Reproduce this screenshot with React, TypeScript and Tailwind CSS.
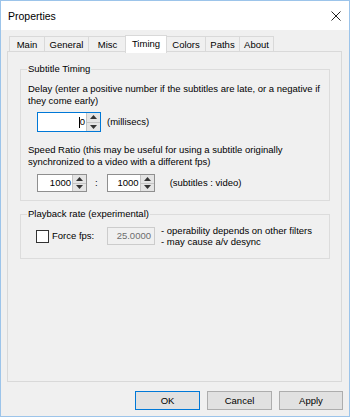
import type { ReactNode } from "react";

const tabs: [string, number][] = [
  ["Main", 35], ["General", 44], ["Misc", 38], ["Timing", 40],
  ["Colors", 39], ["Paths", 34], ["About", 35],
];

function Arrows() {
  return (
    <div className="w-[14px] flex flex-col bg-[#e4e4e4] border-l border-[#c4c4c4]">
      <div className="flex-1 flex items-center justify-center border-b border-[#c4c4c4]">
        <svg width="7" height="4" viewBox="0 0 7 4"><path d="M0 4L3.5 0L7 4Z" fill="#333" /></svg>
      </div>
      <div className="flex-1 flex items-center justify-center">
        <svg width="7" height="4" viewBox="0 0 7 4"><path d="M0 0L3.5 4L7 0Z" fill="#333" /></svg>
      </div>
    </div>
  );
}

function SpinBox({ value, width, height, focused, caret }: {
  value: string, width: string, height: string, focused?: boolean, caret?: boolean
}) {
  return (
    <div className={`flex bg-white border ${focused ? "border-[#0078d7]" : "border-[#8f8f8f]"} ${width} ${height}`}>
      <div className="flex-1 flex items-center justify-end pr-[1px]">
        {caret && <span className="w-px h-[11px] bg-black" />}
        {value}
      </div>
      <Arrows />
    </div>
  );
}

function Group({ title, className, children }: { title: string, className: string, children: ReactNode }) {
  return (
    <div className={`relative ml-[12px] w-[310px] border border-[#dcdcdc] ${className}`}>
      <span className="absolute -top-[7px] left-[6px] bg-[#f0f0f0] px-[1px] leading-[12px]">{title}</span>
      {children}
    </div>
  );
}

export default function App() {
  return (
    <div className="w-[350px] h-[417px] border border-[#9cc4ea] bg-[#f0f0f0] flex flex-col font-['Liberation_Sans',sans-serif] text-[9.5px] text-black leading-[12px]">
      <div className="h-[29px] bg-white flex items-center justify-between pl-[7px] pr-[7px]">
        <span className="text-[10.5px] pt-[1px]">Properties</span>
        <svg width="10" height="10" viewBox="0 0 10 10" className="mr-[1px]">
          <path d="M0.5 0.5L9.5 9.5M9.5 0.5L0.5 9.5" stroke="#222" strokeWidth="1" />
        </svg>
      </div>

      <div className="flex-1 flex flex-col pl-[6px] pr-[6px] pt-[4px]">
        <div className="flex items-end h-[18px] pl-[2px]">
          {tabs.map(([name, w]) => name === "Timing" ? (
            <div key={name} style={{ width: w + 2 }}
              className="relative z-10 -mx-[1px] h-[18px] -mb-px bg-white border border-b-0 border-[#d9d9d9] flex items-center justify-center pb-[2px]">
              {name}
            </div>
          ) : (
            <div key={name} style={{ width: w }}
              className="h-[16px] border border-b-0 border-r-0 last:border-r border-[#d9d9d9] flex items-center justify-center">
              {name}
            </div>
          ))}
        </div>

        <div className="h-[331px] w-[335px] border border-[#d9d9d9] -mt-px">
          <Group title="Subtitle Timing" className="mt-[17px] h-[132px] pl-[7px] pt-[13px]">
            <div className="whitespace-nowrap">
              Delay (enter a positive number if the subtitles are late, or a negative if<br />
              they come early)
            </div>
            <div className="flex items-center gap-[6px] ml-[9px] mt-[5px]">
              <SpinBox value="0" width="w-[64px]" height="h-[20px]" focused caret />
              <span>(millisecs)</span>
            </div>
            <div className="whitespace-nowrap mt-[12px]">
              Speed Ratio (this may be useful for using a subtitle originally<br />
              synchronized to a video with a different fps)
            </div>
            <div className="flex items-center ml-[9px] mt-[6px]">
              <SpinBox value="1000" width="w-[50px]" height="h-[18px]" />
              <span className="ml-[8px] mr-[9px]">:</span>
              <SpinBox value="1000" width="w-[48px]" height="h-[18px]" />
              <span className="ml-[15px]">(subtitles : video)</span>
            </div>
          </Group>

          <Group title="Playback rate (experimental)" className="mt-[13px] h-[45px] pl-[15px] pt-[10px]">
            <div className="flex items-center">
              <span className="w-[13px] h-[13px] bg-white border border-[#333]" />
              <span className="ml-[3px] w-[55px]">Force fps:</span>
              <div className="w-[48px] h-[18px] border border-[#cccccc] flex items-center justify-end pr-[3px] text-[#6d6d6d]">
                25.0000
              </div>
              <div className="ml-[6px] leading-[11px]">
                <div>- operability depends on other filters</div>
                <div>- may cause a/v desync</div>
              </div>
            </div>
          </Group>
        </div>

        <div className="flex justify-end gap-[7px] mt-[9px] pr-[0px]">
          <button className="w-[65px] h-[19px] bg-[#e1e1e1] border border-[#0078d7]">OK</button>
          <button className="w-[65px] h-[19px] bg-[#e1e1e1] border border-[#adadad]">Cancel</button>
          <button className="w-[64px] h-[19px] bg-[#e1e1e1] border border-[#adadad]">Apply</button>
        </div>
      </div>
    </div>
  );
}
